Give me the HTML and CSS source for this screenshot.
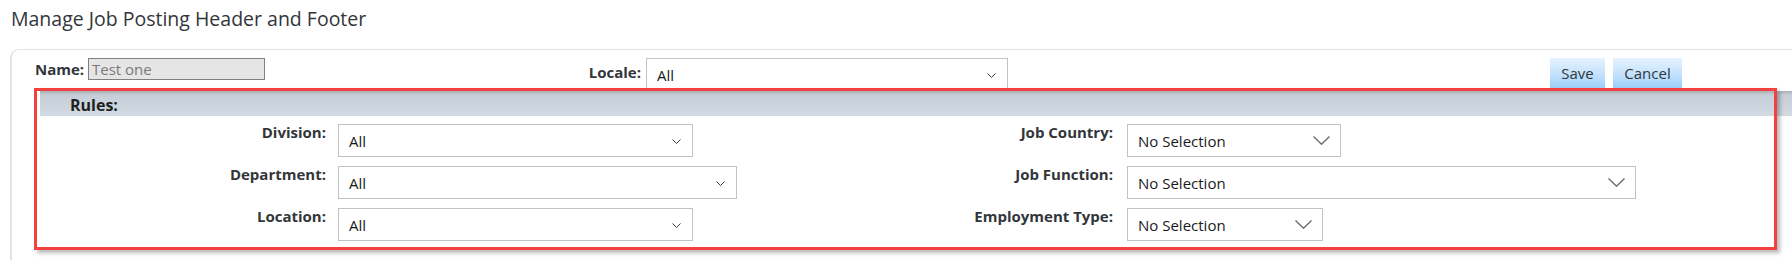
FILE: index.html
```html
<!DOCTYPE html>
<html lang="en">
<head>
<meta charset="utf-8">
<title>Manage Job Posting Header and Footer</title>
<link rel="stylesheet" href="styles.css">
</head>
<body>
<div class="page">
  <h1 class="title">Manage Job Posting Header and Footer</h1>
  <div class="card">
    <div class="toolbar">
      <span class="name-label">Name:</span>
      <div class="name-input">Test one</div>
      <span class="locale-label">Locale:</span>
      <div class="select small locale-select"><span>All</span><svg class="chev-s" width="9" height="5" viewBox="0 0 9 5"><path d="M0.5 0.5 L4.5 4.5 L8.5 0.5"/></svg></div>
      <button class="btn save">Save</button>
      <button class="btn cancel">Cancel</button>
    </div>
    <div class="rules">
      <div class="rules-head">Rules:</div>
      <div class="rules-grid">
        <span class="lbl lbl-left">Division:</span>
        <div class="cell"><div class="select small w-division"><span>All</span><svg class="chev-s" width="9" height="5" viewBox="0 0 9 5"><path d="M0.5 0.5 L4.5 4.5 L8.5 0.5"/></svg></div></div>
        <span class="lbl lbl-right">Job Country:</span>
        <div class="cell"><div class="select large w-country"><span>No Selection</span><svg class="chev-l" width="17" height="9" viewBox="0 0 17 9"><path d="M0.5 0.5 L8.5 8.2 L16.5 0.5"/></svg></div></div>

        <span class="lbl lbl-left">Department:</span>
        <div class="cell"><div class="select small w-department"><span>All</span><svg class="chev-s" width="9" height="5" viewBox="0 0 9 5"><path d="M0.5 0.5 L4.5 4.5 L8.5 0.5"/></svg></div></div>
        <span class="lbl lbl-right">Job Function:</span>
        <div class="cell"><div class="select large w-function"><span>No Selection</span><svg class="chev-l" width="17" height="9" viewBox="0 0 17 9"><path d="M0.5 0.5 L8.5 8.2 L16.5 0.5"/></svg></div></div>

        <span class="lbl lbl-left">Location:</span>
        <div class="cell"><div class="select small w-location"><span>All</span><svg class="chev-s" width="9" height="5" viewBox="0 0 9 5"><path d="M0.5 0.5 L4.5 4.5 L8.5 0.5"/></svg></div></div>
        <span class="lbl lbl-right">Employment Type:</span>
        <div class="cell"><div class="select large w-employment"><span>No Selection</span><svg class="chev-l" width="17" height="9" viewBox="0 0 17 9"><path d="M0.5 0.5 L8.5 8.2 L16.5 0.5"/></svg></div></div>
      </div>
      <div class="highlight"></div>
    </div>
  </div>
</div>
</body>
</html>
```

FILE: styles.css
```css
* { box-sizing: border-box; }

html, body {
  margin: 0;
  padding: 0;
  background: #ffffff;
  overflow: hidden;
}

body {
  font-family: "Open Sans", "Noto Sans", sans-serif;
  color: #32363a;
  width: 1792px;
  height: 260px;
}

.page {
  padding: 0 0 0 10px;
}

.title {
  margin: 0;
  padding: 6px 0 0 1px;
  height: 49px;
  font-size: 19.5px;
  font-weight: 400;
  line-height: 26px;
  color: #32363a;
}

.card {
  border-top: 1px solid #e3e3e3;
  border-left: 2px solid #e3e3e3;
  border-top-left-radius: 9px;
  height: 211px;
}

.toolbar {
  display: flex;
  align-items: flex-start;
  height: 41px;
  padding: 8px 0 0 23px;
}

.name-label {
  width: 53px;
  font-size: 15px;
  font-weight: 700;
  line-height: 22px;
}

.name-input {
  width: 177px;
  height: 22px;
  background: #e5e5e5;
  border: 1px solid #808080;
  color: #7a7a7a;
  font-size: 15px;
  line-height: 20px;
  padding-left: 3px;
}

.locale-label {
  width: 381px;
  text-align: right;
  font-size: 15px;
  font-weight: 700;
  line-height: 22px;
  padding-top: 3px;
  padding-right: 5px;
}

.select {
  display: flex;
  align-items: center;
  justify-content: space-between;
  height: 33px;
  border: 1px solid #c2c2c2;
  background: #ffffff;
  color: #1a1a1a;
  font-size: 15px;
  padding: 1px 11px 0 10px;
}

.chev-s path {
  fill: none;
  stroke: #3a3a3a;
  stroke-width: 1;
}

.chev-l {
  margin-top: -1px;
}

.select.large {
  padding-right: 10px;
}

.chev-l path {
  fill: none;
  stroke: #6a6d70;
  stroke-width: 1.4;
}

.locale-select { width: 362px; }

.btn {
  height: 30px;
  border: none;
  padding: 0;
  font-family: inherit;
  font-size: 15px;
  color: #32363a;
  background: linear-gradient(#e6f3fe 0%, #c6e3fd 50%, #9dcffa 100%);
}

.save {
  width: 55px;
  margin-left: 542px;
}

.cancel {
  width: 69px;
  margin-left: 8px;
}

.rules {
  position: relative;
  margin-left: 28px;
}

.rules-head {
  height: 25px;
  background: linear-gradient(#a8afb5 0px, #c6cfd8 4px, #d2dbe4 100%);
  font-size: 16px;
  font-weight: 700;
  line-height: 22px;
  padding: 3px 0 0 30px;
  color: #1f1f1f;
}

.rules-grid {
  display: grid;
  grid-template-columns: 298px 400px 389px 1fr;
  grid-auto-rows: 33px;
  row-gap: 9px;
  padding-top: 8px;
}

.lbl {
  font-size: 15px;
  font-weight: 700;
  line-height: 16px;
  text-align: right;
  padding-top: 0;
}

.lbl-left { padding-right: 12px; }
.lbl-right { padding-right: 14px; }

.w-division { width: 355px; }
.w-department { width: 399px; }
.w-location { width: 355px; }
.w-country { width: 214px; }
.w-function { width: 509px; }
.w-employment { width: 196px; }

.highlight {
  position: absolute;
  left: -6px;
  top: -3px;
  width: 1743px;
  height: 162px;
  border: 3px solid #f2413f;
  box-shadow: 3px 3px 4px rgba(0, 0, 0, 0.28);
  pointer-events: none;
}
```
